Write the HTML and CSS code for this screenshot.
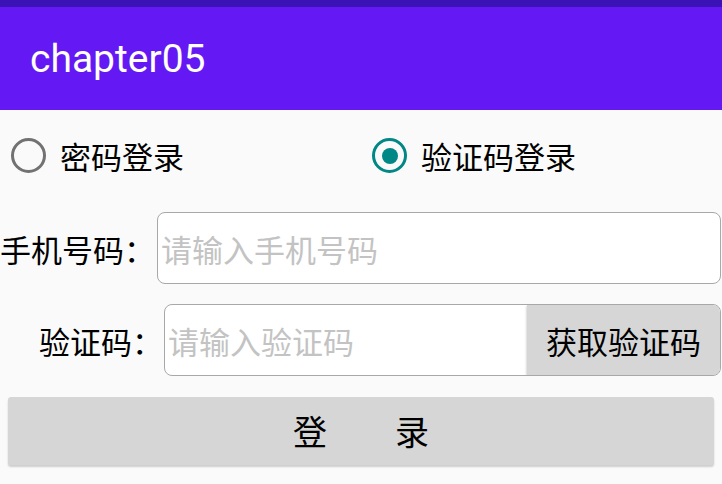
FILE: index.html
```html
<!DOCTYPE html>
<html lang="zh">
<head>
<meta charset="utf-8">
<title>chapter05</title>
<link rel="stylesheet" href="styles.css">
</head>
<body>
<div class="status"></div>
<header class="toolbar"><span class="title">chapter05</span></header>
<main class="content">
  <div class="radio-group">
    <label class="radio">
      <span class="dot"></span>
      <span class="radio-text">密码登录</span>
    </label>
    <label class="radio checked">
      <span class="dot"></span>
      <span class="radio-text">验证码登录</span>
    </label>
  </div>
  <div class="row row-phone">
    <span class="label label-phone">手机号码：</span>
    <div class="field"><span class="placeholder">请输入手机号码</span></div>
  </div>
  <div class="row row-code">
    <span class="label label-code">验证码：</span>
    <div class="field field-code">
      <span class="placeholder">请输入验证码</span>
      <span class="code-btn">获取验证码</span>
    </div>
  </div>
  <div class="login">登<span class="gap"></span>录</div>
</main>
</body>
</html>
```
FILE: styles.css
```css
* { box-sizing: border-box; }
html, body { margin: 0; padding: 0; }
body {
  width: 722px;
  height: 484px;
  overflow: hidden;
  background: #fafafa;
  font-family: "Noto Sans CJK SC", "Noto Sans", sans-serif;
  color: #000;
}
.status { height: 7px; background: #3b12b6; }
.toolbar {
  height: 103px;
  background: #6419f4;
  display: flex;
  align-items: center;
  padding-left: 30px;
}
.title {
  font-family: Roboto, "Noto Sans", sans-serif;
  color: #fff;
  font-size: 39px;
  line-height: 1;
  margin-top: 1px;
}
.content { display: flex; flex-direction: column; }
.radio-group {
  display: flex;
  height: 92px;
  align-items: center;
  padding-top: 2px;
}
.radio {
  flex: 1;
  display: flex;
  align-items: center;
  padding-left: 11px;
}
.dot {
  width: 35px;
  height: 35px;
  border-radius: 50%;
  border: 3.5px solid #727272;
  display: flex;
  align-items: center;
  justify-content: center;
  margin-top: -3px;
}
.checked .dot { border-color: #018786; }
.checked .dot::after {
  content: "";
  width: 16px;
  height: 16px;
  border-radius: 50%;
  background: #018786;
}
.radio-text {
  font-size: 31px;
  margin-left: 14px;
  line-height: 1;
  margin-top: -3px;
}
.row { display: flex; align-items: center; }
.row-phone { height: 72px; margin-top: 10px; padding-right: 1px; }
.row-code { height: 72px; margin-top: 20px; padding-right: 1px; }
.label { font-size: 31px; line-height: 1; }
.label-phone { width: 157px; }
.label-code { width: 164px; padding-left: 39px; }
.field {
  flex: 1;
  height: 100%;
  background: #fff;
  border: 1.5px solid #a8a8a8;
  border-radius: 8px;
  display: flex;
  align-items: center;
  padding-left: 3px;
  overflow: hidden;
}
.placeholder { font-size: 31px; color: #c3c3c3; line-height: 1; flex: 1; }
.code-btn {
  align-self: stretch;
  width: 193px;
  background: #d6d6d6;
  display: flex;
  align-items: center;
  justify-content: center;
  font-size: 31px;
  border-radius: 0 7px 7px 0;
  box-shadow: -1px 1px 2px rgba(0,0,0,0.15);
}
.login {
  margin: 21px 8px 0 8px;
  height: 68px;
  background: #d6d6d6;
  border-radius: 3px;
  box-shadow: 0 2px 2px rgba(0,0,0,0.18);
  display: flex;
  align-items: center;
  justify-content: center;
  font-size: 34px;
  line-height: 1;
  width: 706px;
}
.gap { display: inline-block; width: 68px; }
```
